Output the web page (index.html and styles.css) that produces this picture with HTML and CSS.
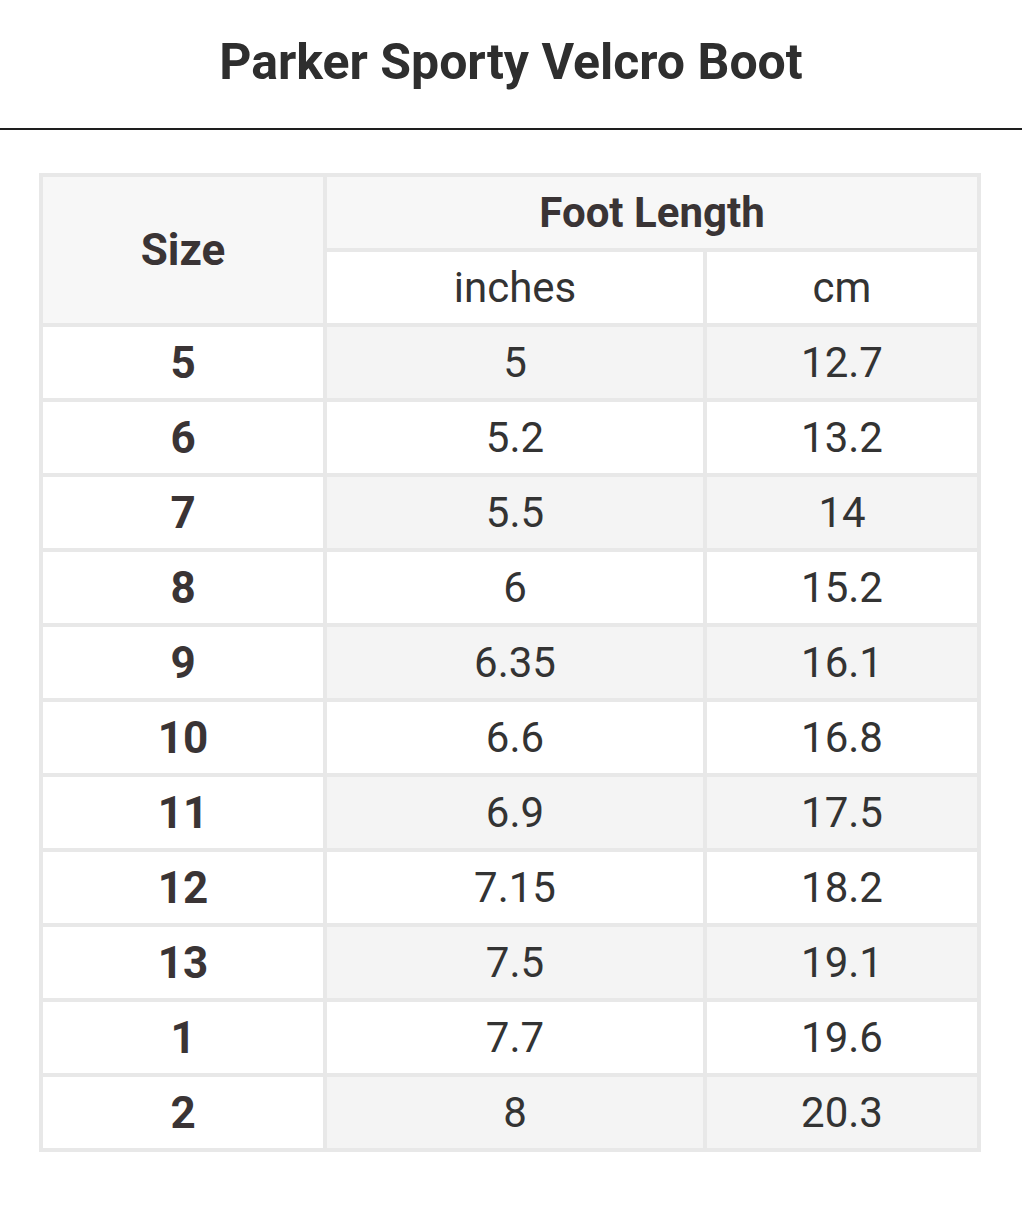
FILE: index.html
```html
<!DOCTYPE html>
<html>
<head>
<meta charset="utf-8">
<link rel="stylesheet" href="styles.css">
</head>
<body>
<h1 class="title">Parker Sporty Velcro Boot</h1>
<hr class="rule">
<table class="chart">
  <colgroup>
    <col class="c-size">
    <col class="c-in">
    <col class="c-cm">
  </colgroup>
  <thead>
    <tr>
      <th class="head size-head" rowspan="2">Size</th>
      <th class="head" colspan="2">Foot Length</th>
    </tr>
    <tr>
      <td class="unit">inches</td>
      <td class="unit">cm</td>
    </tr>
  </thead>
  <tbody>
    <tr class="odd"><th>5</th><td>5</td><td>12.7</td></tr>
    <tr><th>6</th><td>5.2</td><td>13.2</td></tr>
    <tr class="odd"><th>7</th><td>5.5</td><td>14</td></tr>
    <tr><th>8</th><td>6</td><td>15.2</td></tr>
    <tr class="odd"><th>9</th><td>6.35</td><td>16.1</td></tr>
    <tr><th>10</th><td>6.6</td><td>16.8</td></tr>
    <tr class="odd"><th>11</th><td>6.9</td><td>17.5</td></tr>
    <tr><th>12</th><td>7.15</td><td>18.2</td></tr>
    <tr class="odd"><th>13</th><td>7.5</td><td>19.1</td></tr>
    <tr><th>1</th><td>7.7</td><td>19.6</td></tr>
    <tr class="odd"><th>2</th><td>8</td><td>20.3</td></tr>
  </tbody>
</table>
</body>
</html>
```
FILE: styles.css
```css
html, body {
  margin: 0;
  padding: 0;
  background: #ffffff;
}
body {
  font-family: Roboto, "Liberation Sans", sans-serif;
  color: #3a3435;
}
.title {
  margin: 0;
  height: 128px;
  display: flex;
  align-items: center;
  justify-content: center;
  padding-bottom: 4px;
  box-sizing: border-box;
  font-family: Roboto, "Liberation Sans", sans-serif;
  font-weight: 700;
  font-size: 50px;
  color: #2e2e2e;
}
.rule {
  margin: 0;
  border: 0;
  height: 2px;
  background: #1e1e1e;
}
.chart {
  margin: 43px 0 0 39px;
  width: 942px;
  border-collapse: separate;
  border-spacing: 4px;
  background: #e8e8e8;
  table-layout: fixed;
}
.c-size { width: 280px; }
.c-in { width: 376px; }
.c-cm { width: 270px; }
.chart th, .chart td {
  height: 71px;
  padding: 0;
  text-align: center;
  vertical-align: middle;
  line-height: 1;
  background: #ffffff;
}
.chart th {
  font-weight: 700;
  font-size: 44px;
  color: #3a3435;
}
.chart td {
  font-weight: 400;
  font-size: 42px;
  color: #333333;
}
.chart .head {
  background: #f7f7f7;
  font-size: 42px;
}
.chart .size-head {
  font-size: 44px;
}
.chart .unit {
  background: #ffffff;
}
.chart tbody tr.odd td {
  background: #f4f4f4;
}
```
